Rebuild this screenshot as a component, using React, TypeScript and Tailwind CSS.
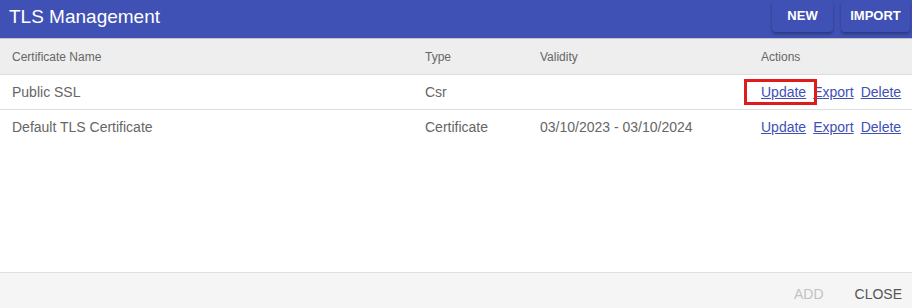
import React from "react";

const rows = [
  { name: "Public SSL", type: "Csr", validity: "", highlight: true },
  { name: "Default TLS Certificate", type: "Certificate", validity: "03/10/2023 - 03/10/2024", highlight: false },
];

export default function App() {
  return (
    <div className="w-[912px] h-[308px] flex flex-col bg-white overflow-hidden" style={{ fontFamily: '"Liberation Sans", Arial, sans-serif' }}>
      <div className="h-[39px] shrink-0 bg-[#3f51b5] flex items-start justify-between border-b border-[#c4c4c4]">
        <div className="pl-[9px] pt-[5px] text-[19px] leading-[24px] text-white">TLS Management</div>
        <div className="flex gap-[8px] pr-[2px]">
          <button className="w-[61px] h-[32px] rounded-[4px] bg-[#3f51b5] text-white text-[13px] font-bold shadow-[0_2px_3px_rgba(0,0,0,0.3)]">NEW</button>
          <button className="w-[69px] h-[32px] rounded-[4px] bg-[#3f51b5] text-white text-[13px] font-bold shadow-[0_2px_3px_rgba(0,0,0,0.3)]">IMPORT</button>
        </div>
      </div>
      <div className="flex-1 flex flex-col">
        <div className="h-[36px] shrink-0 bg-[#eeeeee] border-b border-[#dddddd] flex items-center text-[12px] text-[#666666]">
          <div className="w-[413px] pl-[12px]">Certificate Name</div>
          <div className="w-[115px] pl-[12px]">Type</div>
          <div className="w-[221px] pl-[12px]">Validity</div>
          <div className="flex-1 pl-[12px]">Actions</div>
        </div>
        {rows.map((r, i) => (
          <div key={i} className={`h-[35px] shrink-0 flex items-center text-[14px] text-[#666666] ${i === 0 ? "border-b border-[#dddddd]" : ""}`}>
            <div className="w-[413px] pl-[12px]">{r.name}</div>
            <div className="w-[115px] pl-[12px]">{r.type}</div>
            <div className="w-[221px] pl-[12px]">{r.validity}</div>
            <div className="flex-1 pl-[12px] flex gap-[7px] text-[#3f51b5]">
              <span className="relative underline">
                Update
                {r.highlight && (
                  <span className="absolute left-[-17px] right-[-11px] top-[-3px] bottom-[-2px] border-[3px] border-[#e01b1b]" />
                )}
              </span>
              <span className="underline">Export</span>
              <span className="underline">Delete</span>
            </div>
          </div>
        ))}
      </div>
      <div className="h-[36px] shrink-0 bg-[#f5f5f5] border-t border-[#e0e0e0] flex items-center justify-end pr-[10px] pt-[7px] text-[14px]">
        <span className="text-[#c2c2c2] mr-[31px]">ADD</span>
        <span className="text-[#555555]">CLOSE</span>
      </div>
    </div>
  );
}
